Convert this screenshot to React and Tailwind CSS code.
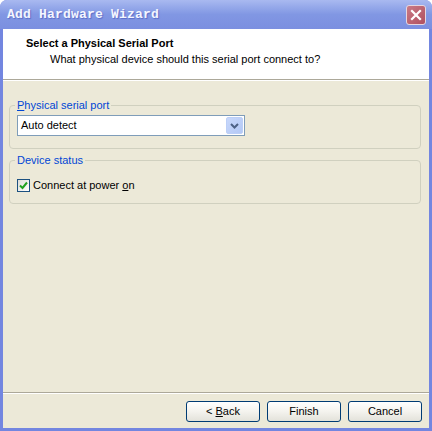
import React from "react";

export default function App() {
  const font = { fontFamily: '"Liberation Sans", Arial, sans-serif' };
  return (
    <div
      className="w-[432px] h-[431px] flex flex-col rounded-t-[7px] overflow-hidden bg-[#7386e0] text-[11px] text-black"
      style={font}
    >
      {/* Title bar */}
      <div className="h-[29px] shrink-0 flex items-center justify-between pl-[7px] pr-[6px] bg-gradient-to-b from-[#a9b9f0] via-[#8197e3] to-[#7b8fe0]">
        <span
          className="text-[13px] font-bold text-[#f4f6ff] tracking-[0.2px] [text-shadow:1px_1px_1px_#5a6cc8]"
          style={{ fontFamily: '"Liberation Mono", "DejaVu Sans Mono", monospace' }}
        >
          Add Hardware Wizard
        </span>
        <div className="w-[20px] h-[20px] rounded-[3px] border border-[#e6d6de] bg-gradient-to-br from-[#c97a86] to-[#b0505f] flex items-center justify-center">
          <svg width="12" height="12" viewBox="0 0 12 12">
            <path d="M2 2 L10 10 M10 2 L2 10" stroke="#fff" strokeWidth="2.2" strokeLinecap="square" />
          </svg>
        </div>
      </div>

      {/* Body */}
      <div className="flex-1 mx-[3px] mb-[3px] bg-[#ECE9D8] flex flex-col">
        {/* Header */}
        <div className="h-[50px] shrink-0 bg-white pl-[23px] pt-[8px] flex flex-col">
          <div className="font-bold leading-[13px]">Select a Physical Serial Port</div>
          <div className="leading-[13px] mt-[3px] pl-[24px]">
            What physical device should this serial port connect to?
          </div>
        </div>
        <div className="h-[2px] shrink-0 border-t border-[#ACA899] border-b border-b-white" />

        {/* Content */}
        <div className="flex-1 flex flex-col pl-[6px] pr-[8px] pt-[18px] gap-[5px]">
          <fieldset className="border border-[#D0D0BF] rounded-[4px] pl-[7px] pr-[7px] pb-[12px]">
            <legend className="-ml-[2px] px-[2px] text-[#0046D5] leading-[13px]">
              <span className="underline">P</span>hysical serial port
            </legend>
            <div className="mt-[3px] w-[228px] h-[21px] border border-[#7F9DB9] bg-white flex items-center justify-between">
              <span className="pl-[3px] leading-[13px]">Auto detect</span>
              <div className="w-[17px] h-[17px] mr-[1px] rounded-[2px] bg-gradient-to-br from-[#c8d8fb] to-[#b3c8f5] border border-[#bccff7] flex items-center justify-center">
                <svg width="9" height="6" viewBox="0 0 9 6">
                  <path d="M1 1 L4.5 4.5 L8 1" stroke="#4D6185" strokeWidth="2" fill="none" />
                </svg>
              </div>
            </div>
          </fieldset>

          <fieldset className="border border-[#D0D0BF] rounded-[4px] pl-[7px] pr-[7px] pb-[11px]">
            <legend className="-ml-[2px] px-[2px] text-[#0046D5] leading-[13px]">Device status</legend>
            <div className="mt-[12px] flex items-center gap-[3px]">
              <div className="w-[13px] h-[13px] border border-[#1C5180] bg-gradient-to-br from-[#dcdcd7] to-white flex items-center justify-center">
                <svg width="9" height="9" viewBox="0 0 9 9">
                  <path d="M1 4.5 L3.5 7 L8 1.5" stroke="#21A121" strokeWidth="2" fill="none" />
                </svg>
              </div>
              <span className="leading-[13px]">
                Connect at power <span className="underline">o</span>n
              </span>
            </div>
          </fieldset>
        </div>

        <div className="h-[2px] shrink-0 border-t border-[#ACA899] border-b border-b-white" />
        <div className="shrink-0 flex justify-end gap-[7px] pr-[7px] pt-[7px] pb-[6px]">
          {[
            <span>
              {"< "}
              <span className="underline">B</span>ack
            </span>,
            <span>Finish</span>,
            <span>Cancel</span>,
          ].map((label, i) => (
            <div
              key={i}
              className="w-[74px] h-[21px] rounded-[3px] border border-[#003C74] bg-gradient-to-b from-white via-[#f4f3ee] to-[#e3e2da] flex items-center justify-center leading-[13px]"
            >
              {label}
            </div>
          ))}
        </div>
      </div>
    </div>
  );
}
